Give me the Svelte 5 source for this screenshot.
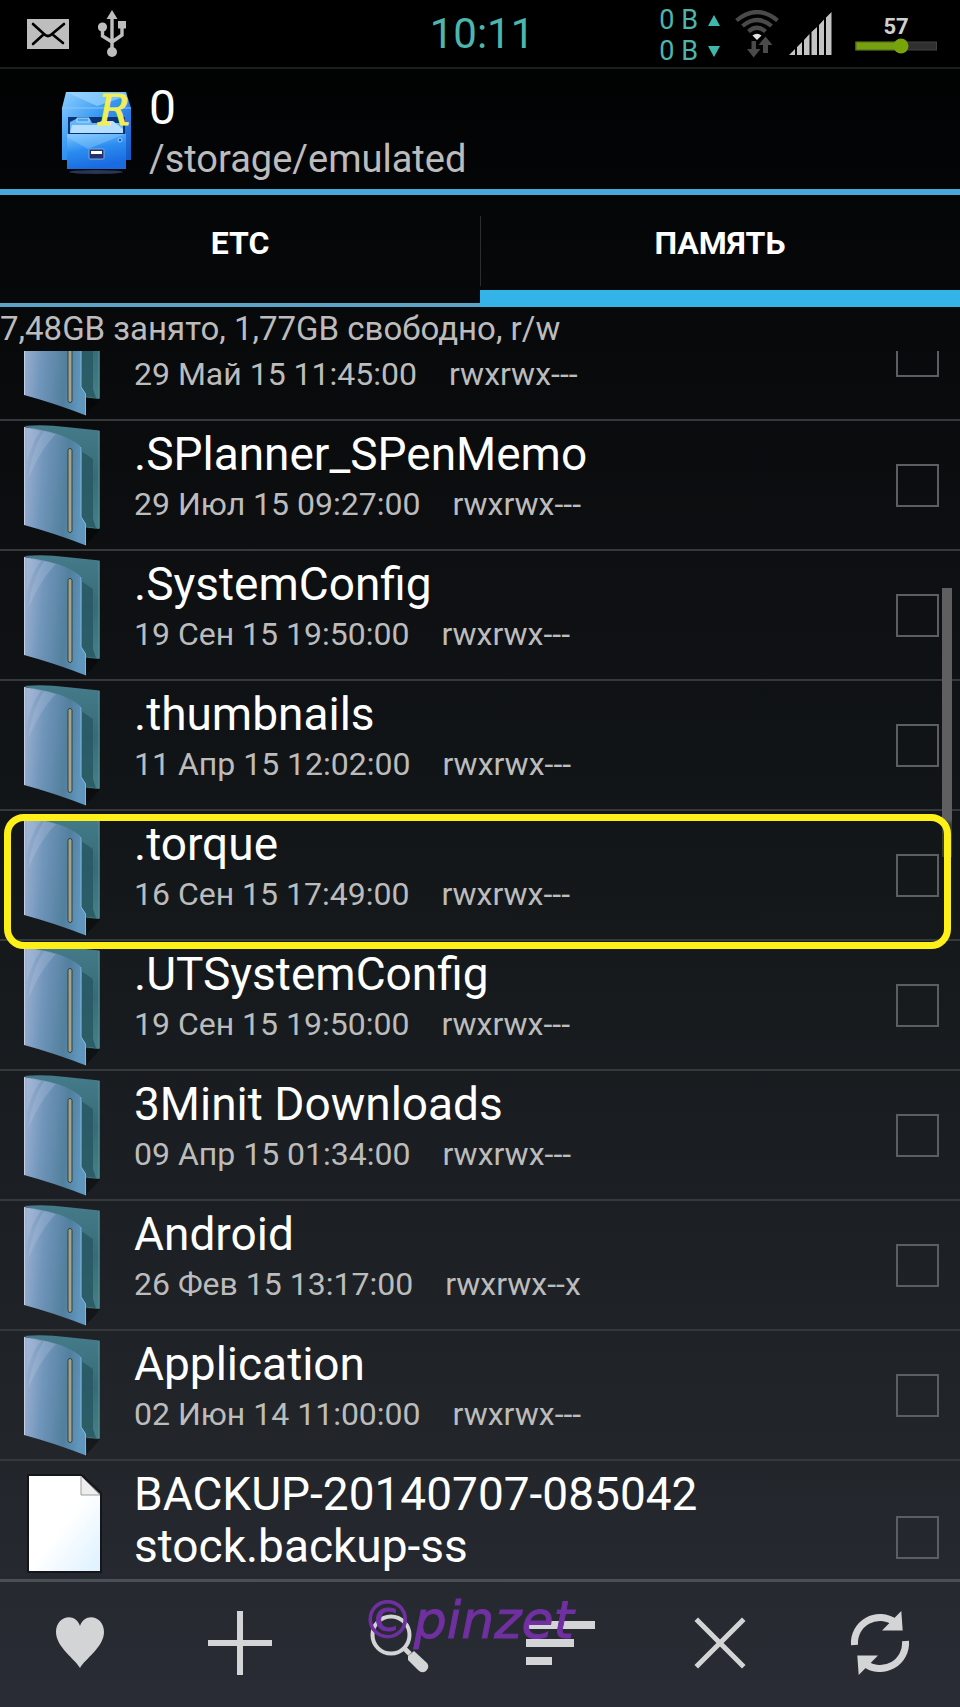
<script>
  let tabs = ["ETC", "ПАМЯТЬ"];
  let active_tab = "ПАМЯТЬ";

  // the first row is scrolled half out of the list, only its date line shows
  let files = [
    { name: "", date: "29 Май 15 11:45:00", perms: "rwxrwx---", type: "folder", checked: false },
    { name: ".SPlanner_SPenMemo", date: "29 Июл 15 09:27:00", perms: "rwxrwx---", type: "folder", checked: false },
    { name: ".SystemConfig", date: "19 Сен 15 19:50:00", perms: "rwxrwx---", type: "folder", checked: false },
    { name: ".thumbnails", date: "11 Апр 15 12:02:00", perms: "rwxrwx---", type: "folder", checked: false },
    { name: ".torque", date: "16 Сен 15 17:49:00", perms: "rwxrwx---", type: "folder", checked: false, marked: true },
    { name: ".UTSystemConfig", date: "19 Сен 15 19:50:00", perms: "rwxrwx---", type: "folder", checked: false },
    { name: "3Minit Downloads", date: "09 Апр 15 01:34:00", perms: "rwxrwx---", type: "folder", checked: false },
    { name: "Android", date: "26 Фев 15 13:17:00", perms: "rwxrwx--x", type: "folder", checked: false },
    { name: "Application", date: "02 Июн 14 11:00:00", perms: "rwxrwx---", type: "folder", checked: false },
    { name: "BACKUP-20140707-085042 stock.backup-ss", date: "", perms: "", type: "file", checked: false },
  ];

  let battery = 57;
</script>

<main>
  <div class="status">
    <div class="status-left">
      <svg width="42" height="30" viewBox="0 0 42 30">
        <rect width="42" height="30" fill="#bebebe" />
        <path d="M6 5 L17 15 Q21 19 25 15 L37 5 M17 15 L6 25 M25 15 L36 24" fill="none" stroke="#000" stroke-width="2.6" stroke-linecap="round" />
      </svg>
      <svg width="28" height="48" viewBox="0 0 28 48">
        <g fill="#bebebe">
          <path d="M14 0 L19.500 9 L8.500 9 Z" />
          <circle cx="4.500" cy="17" r="4.600" />
          <rect x="20" y="11" width="8" height="7.500" />
          <circle cx="14" cy="42" r="5" />
        </g>
        <path d="M14 8 V38 M4.500 19 V26 L14 32 M24 17 V25 L14 32" fill="none" stroke="#bebebe" stroke-width="3.400" />
      </svg>
    </div>
    <time class="clock">10:11</time>
    <div class="status-right">
      <div class="speed">
        <span>0 B</span>
        <svg width="12" height="11" viewBox="0 0 12 11"><path d="M6 0 L12 11 H0 Z" fill="#3fb8ac" /></svg>
        <span>0 B</span>
        <svg width="12" height="11" viewBox="0 0 12 11"><path d="M0 0 H12 L6 11 Z" fill="#3fb8ac" /></svg>
      </div>
      <svg class="wifi" width="44" height="48" viewBox="0 0 44 48">
        <g fill="none" stroke="#4a4a4a" stroke-width="4.200">
          <path d="M1.500 10.500 Q22 -6.500 42.500 10.500" />
          <path d="M7.500 16 Q22 4 36.500 16" />
          <path d="M13.500 21.500 Q22 14 30.500 21.500" />
        </g>
        <path d="M17.500 25.500 Q22 22 26.500 25.500 L22 30 Z" fill="#e4e4e4" />
        <path d="M16.500 31 H21 V39 H25.500 L18.700 47.500 L12 39 H16.500 Z" fill="#4a4a4a" />
        <path d="M28 43 V35 H23.500 L30.500 26.500 L37.500 35 H33 V43 Z" fill="#4a4a4a" />
      </svg>
      <svg class="signal" width="43" height="43" viewBox="0 0 43 43">
        <path d="M0 43 L6 37 V43 Z M8 35 L13 30 V43 H8 Z M15 28 L20.500 22 V43 H15 Z M22.500 20 L28 15 V43 H22.500 Z M30 13 L35 7.500 V43 H30 Z M37 5.500 L42.500 0 V43 H37 Z" fill="#c4c4c4" />
      </svg>
      <div class="battery">
        <span>{battery}</span>
        <svg width="82" height="16" viewBox="0 0 82 16">
          <rect x="0.500" y="4" width="81" height="8" fill="#303030" stroke="#424242" />
          <rect x="1" y="4" width="40" height="8" fill="#76a00f" stroke="#4d6b12" />
          <circle cx="46" cy="8" r="7.500" fill="#76a40a" />
        </svg>
      </div>
    </div>
  </div>

  <header>
    <svg class="logo" width="72" height="84" viewBox="0 0 72 84">
      <defs>
        <linearGradient id="cab" x1="0" y1="0" x2="1" y2="1">
          <stop offset="0" stop-color="#8fd0ff" />
          <stop offset="0.450" stop-color="#3597f2" />
          <stop offset="1" stop-color="#1256c4" />
        </linearGradient>
        <linearGradient id="drawer" x1="0" y1="0" x2="0.300" y2="1">
          <stop offset="0" stop-color="#7cc6ff" />
          <stop offset="0.500" stop-color="#2b8cf0" />
          <stop offset="1" stop-color="#1a6ae0" />
        </linearGradient>
      </defs>
      <ellipse cx="35" cy="81" rx="27" ry="2" fill="#2a3550" />
      <path d="M5 1 H65 L70 17 V69 H1 V17 Z" fill="url(#cab)" />
      <path d="M5 1 H65 L66 5 L36 15 Z" fill="#a4dcff" opacity="0.600" />
      <path d="M1 17 H70" stroke="#82c8ff" stroke-width="1" />
      <rect x="7" y="26" width="57" height="17" fill="#0c3278" />
      <path d="M9 41 V31 L15 28 H29 L31 32 H62 V41 Z" fill="#63b5f7" />
      <path d="M9 42 L11 34 H36 L40 30 H52 L62 38 V42 Z" fill="#b5dfff" />
      <path d="M16 27 H28 V31 H16 Z" fill="#48a5f0" stroke="#b6e0ff" />
      <path d="M6 43 H65 V78 H6 Z" fill="url(#drawer)" />
      <path d="M6 43 H64 L27 58 L6 46 Z" fill="#9bd8ff" opacity="0.350" />
      <rect x="28" y="58" width="15" height="10" rx="1" fill="#24306b" stroke="#78a8e0" />
      <rect x="30" y="60" width="11" height="3" fill="#fff" />
      <circle cx="59" cy="49" r="2" fill="#155cc0" stroke="#9acbfa" />
      <text x="37" y="34" font-family="DejaVu Serif, serif" font-size="42" font-style="italic" fill="#f1ef55" stroke="#f1ef55">R</text>
    </svg>
    <div class="path">
      <h1>0</h1>
      <p>/storage/emulated</p>
    </div>
  </header>

  <nav>
    {#each tabs as tab}
      <button type="button" class:active={tab == active_tab} on:click={() => (active_tab = tab)}>{tab}</button>
    {/each}
  </nav>

  <p class="space">7,48GB занято, 1,77GB свободно, r/w</p>

  <div class="list">
    <ul>
      {#each files as file, i}
        <li class:single={file.type == "file"}>
          {#if file.type == "folder"}
            <svg class="icon" width="80" height="124" viewBox="0 0 80 124">
              <defs>
                <linearGradient id="front{i}" x1="0" y1="0" x2="1" y2="0.150">
                  <stop offset="0" stop-color="#a3b5d6" />
                  <stop offset="0.350" stop-color="#7196bb" />
                  <stop offset="0.750" stop-color="#527f9d" />
                  <stop offset="1" stop-color="#6096bd" />
                </linearGradient>
                <linearGradient id="back{i}" x1="0" y1="0" x2="0" y2="1">
                  <stop offset="0" stop-color="#457b8a" />
                  <stop offset="0.500" stop-color="#376c76" />
                  <stop offset="1" stop-color="#468087" />
                </linearGradient>
              </defs>
              <path d="M62 106 H76 L72 111 L63 121 Z" fill="#000" opacity="0.350" />
              <path d="M0 3 Q20 1 42 4 L75.500 7.500 V106 L58 104 V24 Z" fill="url(#back{i})" />
              <path d="M57 28 L69 36 V96 L72 105 L58 103 Z" fill="#285863" opacity="0.850" />
              <path d="M75 8 V105" stroke="#5a929b" />
              <path d="M0 4 C18 7 42 10 57.500 24 V94 L62 101 V122.500 Q30 110 0 102 Z" fill="url(#front{i})" />
              <path d="M3 5 L17 8 Q7 20 3 40 Z M20 8 L32 11 Q17 26 4 56 Q8 26 20 8 Z" fill="#c0cde5" opacity="0.250" />
              <path d="M57 24 V94 L61.500 101 V122" fill="none" stroke="#82b5dc" />
              <path d="M0.500 4 V102" stroke="#c3d0e4" />
              <rect x="44" y="25.500" width="4" height="84" rx="2" fill="#a8a482" stroke="#28414d" />
            </svg>
          {:else}
            <svg class="icon" width="80" height="106" viewBox="0 0 80 106">
              <defs>
                <linearGradient id="sheet" x1="0" y1="0" x2="1" y2="1">
                  <stop offset="0.500" stop-color="#fff" />
                  <stop offset="1" stop-color="#dcf1ff" />
                </linearGradient>
              </defs>
              <path d="M4 8 H58 L77 26 V105 H4 Z" fill="#14161a" stroke="#14161a" stroke-width="2" />
              <path d="M5 9 H57 L76 27 V104 H5 Z" fill="url(#sheet)" />
              <path d="M57 9 V28 H76 Z" fill="#eee" stroke="#9c9c9c" />
            </svg>
          {/if}
          <label for="file{i}">
            <span class="name">{file.name}</span>
            {#if file.date}
              <span class="meta"><span>{file.date}</span><span>{file.perms}</span></span>
            {/if}
          </label>
          <input type="checkbox" id="file{i}" bind:checked={file.checked} />
          {#if file.marked}
            <div class="marker"></div>
          {/if}
        </li>
      {/each}
    </ul>
    <div class="thumb"></div>
  </div>

  <footer>
    <button type="button" aria-label="Закладки">
      <svg width="72" height="72" viewBox="-36 -36 72 72">
        <path d="M0 25 C-5 16 -24 4 -24 -11 C-24 -28 -4 -31 0 -17 C4 -31 24 -28 24 -11 C24 4 5 16 0 25 Z" fill="#d3d4d6" />
      </svg>
    </button>
    <button type="button" aria-label="Создать">
      <svg width="72" height="72" viewBox="-36 -36 72 72">
        <path d="M0 -32 V32 M-32 0 H32" stroke="#d3d4d6" stroke-width="6" />
      </svg>
    </button>
    <button type="button" aria-label="Поиск">
      <svg width="72" height="72" viewBox="-36 -36 72 72">
        <circle cx="-9" cy="-8" r="18.500" fill="none" stroke="#d3d4d6" stroke-width="4" />
        <path d="M4 5 L10 11" stroke="#d3d4d6" stroke-width="5" />
        <path d="M8 13 L14 8 L27 20 Q30 24 26 28 Q22 31 18 27 L8 17 Z" fill="#d3d4d6" />
      </svg>
    </button>
    <button type="button" aria-label="Сортировка">
      <svg width="72" height="72" viewBox="-36 -36 72 72">
        <path d="M-34 -22 H35 V-14 H-34 Z M-34 -4 H14 V4 H-34 Z M-34 14 H-8 V22 H-34 Z" fill="#d3d4d6" />
      </svg>
    </button>
    <button type="button" aria-label="Закрыть">
      <svg width="72" height="72" viewBox="-36 -36 72 72">
        <path d="M-22 -22 L22 22 M22 -22 L-22 22" stroke="#d3d4d6" stroke-width="5" stroke-linecap="square" />
      </svg>
    </button>
    <button type="button" aria-label="Обновить">
      <svg width="72" height="72" viewBox="-36 -36 72 72">
        <g fill="none" stroke="#d3d4d6" stroke-width="7">
          <path d="M-25.500 2 A25.500 25.500 0 0 1 15 -20.600" />
          <path d="M25.500 -2 A25.500 25.500 0 0 1 -15 20.600" />
        </g>
        <path d="M21.300 -32 L22.700 -12.500 H2 Z M-21.300 32 L-22.700 12.500 H-2 Z" fill="#d3d4d6" />
      </svg>
    </button>
    <span class="watermark">©pinzet</span>
  </footer>
</main>

<style>
  :global(body) {
    margin: 0;
    background: #000;
  }

  main {
    display: flex;
    flex-direction: column;
    height: 100vh;
    font-family: Roboto, "Noto Sans", sans-serif;
    color: #fff;
    background: linear-gradient(#000 0%, #050608 13%, #0a0b0d 24%, #14181b 53%, #22262b 85%, #292c34 100%);
  }

  h1, p, ul {
    margin: 0;
    padding: 0;
    font-weight: 400;
  }

  svg {
    display: block;
    flex: none;
  }

  button {
    border: 0;
    padding: 0;
    background: none;
    font-family: inherit;
    color: inherit;
    cursor: pointer;
  }

  .status {
    display: grid;
    grid-template-columns: 1fr auto 1fr;
    align-items: center;
    height: 67px;
    padding: 0 23px 0 27px;
    background: #000;
    border-bottom: 2px solid #1d1d1d;
  }

  .status-left {
    display: flex;
    align-items: center;
    gap: 29px;
  }

  .clock {
    font-size: 42px;
    line-height: 48px;
    color: #4db6ac;
  }

  .status-right {
    display: flex;
    justify-content: flex-end;
    align-items: center;
  }

  .speed {
    display: grid;
    grid-template-columns: auto 12px;
    column-gap: 10px;
    align-items: center;
    padding-top: 5px;
    font-size: 27px;
    line-height: 31px;
    color: #4db6ac;
  }

  .wifi {
    margin-left: 15px;
  }

  .signal {
    margin-left: 10px;
  }

  .battery {
    display: flex;
    flex-direction: column;
    align-items: center;
    padding-top: 2px;
    margin-left: 23px;
    font-size: 22px;
    font-weight: 700;
    line-height: 22px;
    color: #d0d0d0;
  }

  header {
    display: flex;
    align-items: center;
    gap: 16px;
    height: 112px;
    padding: 8px 0 0 61px;
    border-bottom: 6px solid #4aa8d8;
  }

  .logo {
    overflow: visible;
  }

  .path {
    color: #bcbcbc;
    font-size: 38px;
    line-height: 50px;
  }

  .path h1 {
    color: #fff;
    font-size: 48px;
    line-height: 52px;
  }

  nav {
    display: flex;
    height: 112px;
    position: relative;
  }

  nav button {
    flex: 1;
    padding-bottom: 12px;
    border-bottom: 4px solid #5ba3c9;
    font-size: 32px;
    font-weight: 700;
  }

  nav button.active {
    padding-bottom: 0;
    border-bottom: 17px solid #34b3e8;
  }

  nav::after {
    content: "";
    position: absolute;
    left: 50%;
    top: 21px;
    width: 1px;
    height: 70px;
    background: #2c2d2f;
  }

  .space {
    font-size: 33px;
    line-height: 44px;
    color: #bcbcbc;
  }

  .list {
    flex: 1;
    min-height: 0;
    overflow: hidden;
    position: relative;
  }

  ul {
    list-style: none;
    margin-top: -60px;
  }

  li {
    display: flex;
    align-items: center;
    box-sizing: border-box;
    min-height: 130px;
    padding: 0 21px 0 24px;
    border-bottom: 2px solid #36393c;
    position: relative;
  }

  li.single {
    min-height: 154px;
  }

  .icon {
    align-self: flex-start;
    margin: 2px 30px 0 0;
  }

  .single .icon {
    margin-top: 6px;
  }

  label {
    flex: 1;
    align-self: flex-start;
    padding-top: 7px;
  }

  .name {
    display: block;
    max-width: 600px;
    min-height: 52px;
    font-size: 46px;
    line-height: 52px;
  }

  .meta {
    display: flex;
    gap: 32px;
    font-size: 32px;
    line-height: 48px;
    color: #bcbcbc;
  }

  input {
    appearance: none;
    width: 43px;
    height: 43px;
    margin: 0;
    border: 2px solid #5c5f61;
  }

  input:checked {
    background: #34b3e8;
  }

  .marker {
    position: absolute;
    z-index: 1;
    top: 3px;
    left: 4px;
    right: 9px;
    bottom: -10px;
    border: 7px solid #fdf019;
    border-radius: 20px;
    pointer-events: none;
  }

  .thumb {
    position: absolute;
    top: 237px;
    right: 8px;
    width: 10px;
    height: 269px;
    background: linear-gradient(#5f5f5f 86%, #3b3d36 88%);
  }

  footer {
    display: flex;
    height: 125px;
    border-top: 3px solid #4a4f56;
    position: relative;
  }

  footer button {
    flex: 1;
    display: flex;
    justify-content: center;
    align-items: center;
    padding-bottom: 3px;
  }

  .watermark {
    position: absolute;
    top: 8px;
    left: 38%;
    margin-left: -3px;
    font-family: "DejaVu Sans", sans-serif;
    font-size: 52px;
    font-style: italic;
    line-height: 60px;
    color: #7030a0;
    -webkit-text-stroke: 1px #7030a0;
    pointer-events: none;
  }
</style>
